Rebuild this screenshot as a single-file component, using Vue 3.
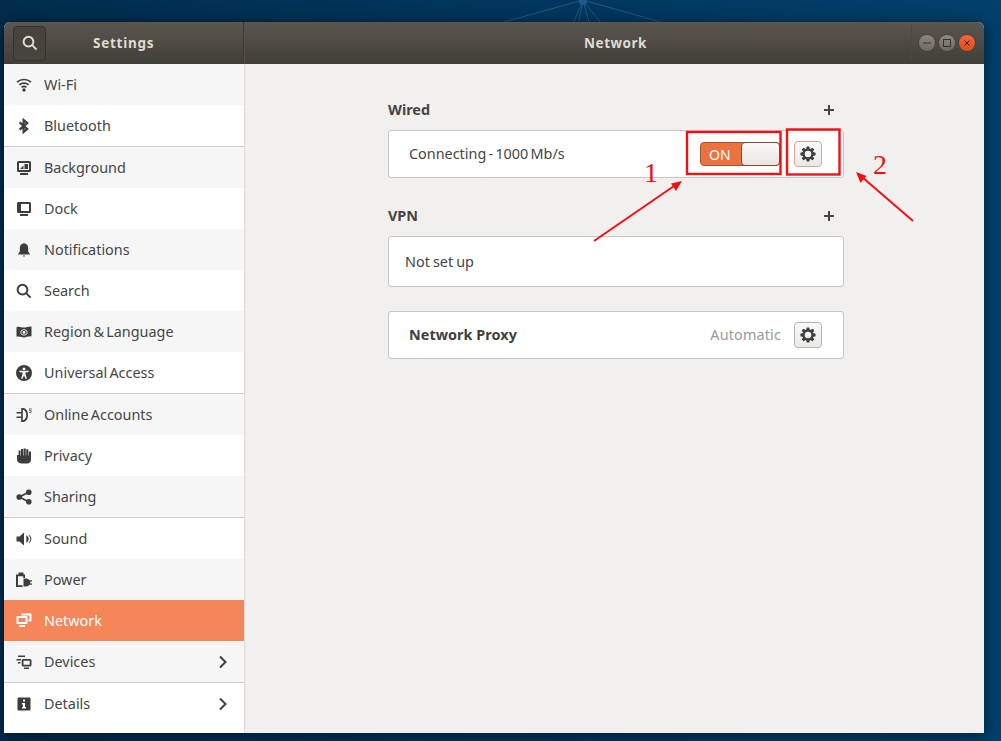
<script setup>
const gearPath = (() => {
  const pts = []
  const teeth = 8
  for (let i = 0; i < teeth; i++) {
    const a = (i / teeth) * Math.PI * 2
    const step = (Math.PI * 2) / teeth
    const corners = [
      [a - step * 0.46, 5.4],
      [a - step * 0.2, 7.7],
      [a + step * 0.2, 7.7],
      [a + step * 0.46, 5.4],
    ]
    for (const [t, r] of corners) {
      pts.push(`${(8 + Math.sin(t) * r).toFixed(2)} ${(8 - Math.cos(t) * r).toFixed(2)}`)
    }
  }
  return `M${pts.join('L')}ZM8 4.7a3.3 3.3 0 1 0 0 6.6a3.3 3.3 0 0 0 0-6.6Z`
})()

const icons = {
  wifi: { s: 'M1 5.2C5 1.6 11 1.6 15 5.2M3.4 7.8C6 5.6 10 5.6 12.6 7.8M5.6 10.2C7 9.2 9 9.2 10.4 10.2', f: 'M6.3 13a1.7 1.7 0 1 0 3.4 0a1.7 1.7 0 1 0-3.4 0Z', w: 1.7 },
  bluetooth: { s: 'M3.6 4.4L11.2 11L7.6 14V2L11.2 5L3.6 11.6', w: 2.2 },
  background: { f: 'M2.5 1H13.5A1.5 1.5 0 0 1 15 2.5V10.5A1.5 1.5 0 0 1 13.5 12H2.5A1.5 1.5 0 0 1 1 10.5V2.5A1.5 1.5 0 0 1 2.5 1ZM3 3V10H13V3ZM4 9L7.5 5.5V9ZM8.5 4H12V9H8.5ZM4 13H12V15H4Z', r: 'evenodd' },
  dock: { f: 'M2.5 1H13.5A1.5 1.5 0 0 1 15 2.5V10.5A1.5 1.5 0 0 1 13.5 12H2.5A1.5 1.5 0 0 1 1 10.5V2.5A1.5 1.5 0 0 1 2.5 1ZM5 3V10H13V3ZM4 13H12V15H4Z', r: 'evenodd' },
  bell: { f: 'M8 1.2C10.8 1.2 12.2 3.4 12.2 6V9.5L14.2 12.6H1.8L3.8 9.5V6C3.8 3.4 5.2 1.2 8 1.2ZM6.8 13.6H9.2L8 15Z' },
  search: { s: 'M10.4 10.4L14.6 14.6M11.4 6.7A4.9 4.9 0 1 1 1.6 6.7A4.9 4.9 0 1 1 11.4 6.7Z', w: 2 },
  region: { f: 'M.5 3.2C3.5 2 6 3.8 8 3.6C10 3.4 12.5 2.2 15.5 2.4V12.4C12.5 12 10 13.4 8 13.4C6 13.4 3.5 12 .5 12.8ZM8 5.2C5.8 5.2 4.4 6.8 4.4 8.4C4.4 10 5.8 11.4 8 11.4C10.2 11.4 11.6 10 11.6 8.4C11.6 6.8 10.2 5.2 8 5.2ZM8 6C9.6 6 10.7 7 10.7 8.4C10.7 9.7 9.6 10.6 8 10.6C6.4 10.6 5.3 9.7 5.3 8.4C5.3 7 6.4 6 8 6ZM8 7A1.4 1.4 0 1 0 8 9.8A1.4 1.4 0 1 0 8 7Z', r: 'evenodd' },
  access: { f: 'M8 0A8 8 0 1 1 8 16A8 8 0 1 1 8 0ZM8 2.4A1.5 1.5 0 1 0 8 5.4A1.5 1.5 0 1 0 8 2.4ZM3.4 5.6V6.9L6.5 7.6V9.5L5 13.6L6.2 14L8 10.6L9.8 14L11 13.6L9.5 9.5V7.6L12.6 6.9V5.6L8 6.3Z', r: 'evenodd' },
  online: { f: 'M5.2 1H7C10 1 12 4 12 8C12 12 10 15 7 15H5.2ZM6.8 2.8V13.2C8.9 13 10.3 10.8 10.3 8C10.3 5.2 8.9 3 6.8 2.8ZM.5 4.9H5.2V6.5H.5ZM.5 9.5H5.2V11.1H.5ZM13.4 1.5H15.6V2.3H14.2V3.2H15.4V5.8H13.2V5H14.6V4H13.4Z', r: 'evenodd' },
  hand: { f: 'M2.6 2.4H4.5V7.4H5V.9H7.1V7.4H7.6V.4H9.7V7.4H10.2V1.3H12.3V7.4H12.8V3.6H15V11.5C15 14 13.4 15.4 11.2 15.4H5.2C2.6 15.4 1 14 1 11.6V7H2.6Z' },
  share: { s: 'M12.7 3.2L3.3 8L12.7 12.8', f: 'M10 3.2a2.8 2.8 0 1 0 5.6 0a2.8 2.8 0 1 0-5.6 0ZM.4 8a2.8 2.8 0 1 0 5.6 0a2.8 2.8 0 1 0-5.6 0ZM10 12.8a2.8 2.8 0 1 0 5.6 0a2.8 2.8 0 1 0-5.6 0Z', w: 1.8 },
  sound: { f: 'M.5 5.5H3.5L8 1.6V14.4L3.5 10.5H.5ZM10.3 4.3C11.9 5.2 12.7 6.5 12.7 8C12.7 9.5 11.9 10.8 10.3 11.7ZM13 3.8C14.6 5 15.4 6.4 15.4 8C15.4 9.6 14.6 11 13 12.2L12.6 11.6C13.8 10.6 14.4 9.4 14.4 8C14.4 6.6 13.8 5.4 12.6 4.4Z' },
  power: { f: 'M2.5 .5H7.5V2.5H9V6H7.2V4.2H2V13.2H6.5V15H0V2.5H2.5ZM7.5 6.5H10A4.5 4.5 0 0 1 13.6 8.2H16V9.6H14.3V11.4H16V12.8H13.6A4.5 4.5 0 0 1 10 14.5H7.5Z', r: 'evenodd' },
  network: { f: 'M1.5 3H10.5A1 1 0 0 1 11.5 4V10A1 1 0 0 1 10.5 11H1.5A1 1 0 0 1 .5 10V4A1 1 0 0 1 1.5 3ZM2.5 5V9H9.5V5ZM3 12H9V14H3ZM5.5 .5H14.5A1 1 0 0 1 15.5 1.5V7.5A1 1 0 0 1 14.5 8.5H12.5V6.5H13.5V2.5H5.5Z', r: 'evenodd' },
  devices: { f: 'M2 1.6H9V3H2ZM.5 5H5V6.6H.5ZM2 8H4.4V9.6H2ZM7.2 5H14A1.5 1.5 0 0 1 15.5 6.5V11A1.5 1.5 0 0 1 14 12.5H7.2A1.5 1.5 0 0 1 5.7 11V6.5A1.5 1.5 0 0 1 7.2 5ZM7.5 6.8V10.7H13.7V6.8ZM8 13.4H13V15H8Z', r: 'evenodd' },
  info: { f: 'M2.5 1.5H13.5A1 1 0 0 1 14.5 2.5V13.5A1 1 0 0 1 13.5 14.5H2.5A1 1 0 0 1 1.5 13.5V2.5A1 1 0 0 1 2.5 1.5ZM7 3.5V5.5H9V3.5ZM6 7V8.4H7V11H6V12.5H10V11H9V7Z', r: 'evenodd' },
}

const rows = [
  { label: 'Wi-Fi', icon: 'wifi' },
  { label: 'Bluetooth', icon: 'bluetooth', sep: true },
  { label: 'Background', icon: 'background' },
  { label: 'Dock', icon: 'dock' },
  { label: 'Notifications', icon: 'bell' },
  { label: 'Search', icon: 'search' },
  { label: 'Region & Language', icon: 'region' },
  { label: 'Universal Access', icon: 'access', sep: true },
  { label: 'Online Accounts', icon: 'online' },
  { label: 'Privacy', icon: 'hand' },
  { label: 'Sharing', icon: 'share', sep: true },
  { label: 'Sound', icon: 'sound' },
  { label: 'Power', icon: 'power' },
  { label: 'Network', icon: 'network', active: true },
  { label: 'Devices', icon: 'devices', chevron: true, sep: true },
  { label: 'Details', icon: 'info', chevron: true },
]
</script>

<template>
  <div class="desktop">
    <svg class="wallpaper" width="1001" height="741" viewBox="0 0 1001 741" aria-hidden="true">
      <g stroke="#1f5a88" stroke-width="1" fill="none">
        <path d="M583 0L490 26M583 0L675 26M583 0L572 26M583 0L578 26M583 0L590 26M583 0L603 26" />
      </g>
      <g fill="#1f5a88">
        <circle cx="583" cy="1" r="4" />
        <circle cx="490" cy="26" r="3" />
        <circle cx="675" cy="26" r="3" />
      </g>
    </svg>

    <div class="window">
      <header class="titlebar">
        <div class="title-left">
          <button class="search-btn" aria-label="Search">
            <svg width="16" height="16" viewBox="0 0 16 16"><path d="M10.4 10.4L14.6 14.6M11.4 6.7A4.9 4.9 0 1 1 1.6 6.7A4.9 4.9 0 1 1 11.4 6.7Z" fill="none" stroke="#dfdbd2" stroke-width="2" /></svg>
          </button>
          <span class="app-title">Settings</span>
        </div>
        <div class="title-right">
          <span class="page-title">Network</span>
          <div class="controls">
            <span class="ctl"><svg width="10" height="10" viewBox="0 0 10 10"><path d="M1 5H9" stroke="#36342f" stroke-width="1" /></svg></span>
            <span class="ctl"><svg width="10" height="10" viewBox="0 0 10 10"><rect x="1.5" y="1.5" width="7" height="7" fill="none" stroke="#36342f" stroke-width="1" /></svg></span>
            <span class="ctl close"><svg width="10" height="10" viewBox="0 0 10 10"><path d="M2.5 2.5L7.5 7.5M7.5 2.5L2.5 7.5" stroke="#4a1c0c" stroke-width="1" /></svg></span>
          </div>
        </div>
      </header>

      <div class="body">
        <nav class="sidebar">
          <div
            v-for="(row, i) in rows"
            :key="row.label"
            class="row"
            :class="{ odd: i % 2 === 0, active: row.active, sep: row.sep }"
          >
            <svg class="row-icon" width="16" height="16" viewBox="0 0 16 16">
              <path
                v-if="icons[row.icon].s"
                :d="icons[row.icon].s"
                fill="none"
                stroke="currentColor"
                :stroke-width="icons[row.icon].w || 1.5"
              />
              <path
                v-if="icons[row.icon].f"
                :d="icons[row.icon].f"
                fill="currentColor"
                :fill-rule="icons[row.icon].r || 'nonzero'"
              />
            </svg>
            <span class="row-label">{{ row.label }}</span>
            <svg v-if="row.chevron" class="chev" width="10" height="14" viewBox="0 0 10 14"><path d="M2 1.5L7.5 7L2 12.5" fill="none" stroke="#3f3f3f" stroke-width="2" /></svg>
          </div>
        </nav>

        <main class="content">
          <section class="column">
            <div class="sec-head wired-head">
              <h2>Wired</h2>
              <svg class="plus" width="12" height="12" viewBox="0 0 12 12"><path d="M6 1V11M1 6H11" stroke="#454545" stroke-width="2" /></svg>
            </div>
            <div class="card wired">
              <span class="wired-text">Connecting - 1000 Mb/s</span>
              <div class="switch">
                <span class="on">ON</span>
                <span class="thumb"></span>
              </div>
              <button class="gear tinted" aria-label="Wired settings">
                <svg width="16" height="16" viewBox="0 0 16 16"><path :d="gearPath" fill="#3f3f3f" fill-rule="evenodd" /></svg>
              </button>
            </div>

            <div class="sec-head vpn-head">
              <h2>VPN</h2>
              <svg class="plus" width="12" height="12" viewBox="0 0 12 12"><path d="M6 1V11M1 6H11" stroke="#454545" stroke-width="2" /></svg>
            </div>
            <div class="card vpn"><span class="vpn-text">Not set up</span></div>

            <div class="card proxy">
              <strong>Network Proxy</strong>
              <span class="auto">Automatic</span>
              <button class="gear" aria-label="Proxy settings">
                <svg width="16" height="16" viewBox="0 0 16 16"><path :d="gearPath" fill="#3f3f3f" fill-rule="evenodd" /></svg>
              </button>
            </div>
          </section>
        </main>
      </div>
    </div>

    <svg class="annotations" width="1001" height="741" viewBox="0 0 1001 741" aria-hidden="true">
      <rect x="687" y="132" width="93.5" height="42" fill="none" stroke="#f40f14" stroke-width="2.4" />
      <rect x="787" y="129.5" width="52.5" height="45" fill="none" stroke="#f40f14" stroke-width="2.4" />
      <path d="M594 241L674 186" stroke="#f40f14" stroke-width="2" fill="none" />
      <path d="M682 181L671 183.5L676 191Z" fill="#f40f14" />
      <path d="M913 221L862 177" stroke="#f40f14" stroke-width="2" fill="none" />
      <path d="M856 172L860.5 183L866.5 176Z" fill="#f40f14" />
    </svg>
    <span class="mark mark-1">1</span>
    <span class="mark mark-2">2</span>
  </div>
</template>

<style>
html, body { margin: 0; padding: 0; background: #012f52; }
</style>

<style scoped>
.desktop {
  position: relative;
  width: 1001px;
  height: 741px;
  overflow: hidden;
  box-sizing: border-box;
  padding: 22px 17px 8px 4px;
  background: linear-gradient(90deg, #012c4d 0%, #02406c 100%);
  font-family: "Noto Sans", "Open Sans", sans-serif;
  font-size: 14.4px;
  word-spacing: -1.5px;
  color: #454545;
}
.wallpaper, .annotations { position: absolute; left: 0; top: 0; pointer-events: none; }
.window {
  position: relative;
  height: 711px;
  display: flex;
  flex-direction: column;
  border-radius: 6px 6px 0 0;
  overflow: hidden;
  box-shadow: 0 2px 16px rgba(0, 0, 0, 0.55);
  background: #f2f0ee;
}
.titlebar {
  height: 42px;
  flex: none;
  display: flex;
  background: linear-gradient(180deg, #5b574f 0%, #413e38 100%);
  color: #dfdbd2;
  font-weight: 700;
}
.title-left {
  width: 240px;
  flex: none;
  box-sizing: border-box;
  padding-left: 9px;
  display: flex;
  align-items: center;
  border-right: 1px solid #3a3732;
  box-shadow: 1px 0 0 #57534c;
}
.search-btn {
  width: 33px;
  height: 35px;
  padding: 0;
  display: flex;
  align-items: center;
  justify-content: center;
  border: 1px solid #35332e;
  border-radius: 4px;
  background: #47443e;
}
.app-title {
  margin-left: 47px;
  letter-spacing: 0.75px;
  font-size: 13.5px;
}
.title-right {
  flex: 1;
  position: relative;
  display: flex;
  align-items: center;
  justify-content: center;
}
.page-title {
  margin-left: 3px;
  font-size: 13.5px;
  letter-spacing: 0.5px;
}
.controls {
  position: absolute;
  right: 9px;
  top: 3px;
  bottom: 3px;
  display: flex;
  align-items: center;
  gap: 4px;
  padding-left: 7px;
  border-left: 1px solid #4b4842;
}
.ctl {
  width: 16px;
  height: 16px;
  border-radius: 50%;
  display: flex;
  align-items: center;
  justify-content: center;
  background: linear-gradient(180deg, #8b887f, #6d6a63);
  box-shadow: 0 0 0 0.5px #3a3732;
}
.ctl.close { background: linear-gradient(180deg, #f0683a, #de4d1e); }
.body { flex: 1; display: flex; min-height: 0; }
.sidebar {
  width: 240px;
  flex: none;
  background: #fff;
  border-right: 1px solid #dcdad6;
}
.row {
  height: 41px;
  display: flex;
  align-items: center;
  padding: 0 12px;
  background: #fff;
}
.row.odd { background: #f6f6f6; }
.row.sep { box-sizing: content-box; border-bottom: 1px solid #cfcdca; }
.row.active { background: #f5865a; color: #fff; }
.row-icon { flex: none; color: #3d3d3d; }
.row.active .row-icon { color: #fff; }
.row-label { margin-left: 12px; margin-bottom: 1px; flex: 1; }
.chev { flex: none; margin-right: 4px; }
.content {
  flex: 1;
  display: flex;
  justify-content: flex-start;
  padding-left: 143px;
}
.column { width: 456px; }
h2 { margin: 0 0 2px; font-size: 14.4px; font-weight: 700; color: #454545; }
.sec-head {
  display: flex;
  align-items: center;
  justify-content: space-between;
  height: 20px;
  padding-right: 9px;
}
.wired-head { margin-top: 36px; margin-bottom: 10px; }
.vpn-head { margin-top: 28px; margin-bottom: 10px; }
.card {
  box-sizing: border-box;
  background: #fff;
  border: 1px solid #c8c6c3;
  border-radius: 3px;
  display: flex;
  align-items: center;
}
.wired { height: 48px; padding: 0 21px 0 20px; }
.wired-text { flex: 1; margin-bottom: 2px; }
.switch {
  width: 80px;
  height: 24px;
  box-sizing: border-box;
  display: flex;
  align-items: center;
  border: 1px solid #a6542e;
  border-radius: 4px;
  background: #ec7242;
  color: #fff;
  position: relative;
}
.on { margin-left: 8px; font-size: 14px; }
.thumb {
  position: absolute;
  right: -1px;
  top: -1px;
  bottom: -1px;
  width: 39px;
  box-sizing: border-box;
  border: 1px solid #8a4a30;
  border-radius: 4px;
  background: linear-gradient(180deg, #fbfafa, #e8e6e3);
}
.gear {
  flex: none;
  width: 28px;
  height: 26px;
  margin-left: 14px;
  padding: 0;
  display: flex;
  align-items: center;
  justify-content: center;
  border: 1px solid #b5b3ae;
  border-radius: 4px;
  background: linear-gradient(180deg, #fafafa, #ebe9e6);
}
.gear.tinted { border-color: #dca68d; }
.vpn { height: 51px; padding-left: 16px; }
.vpn-text { margin-bottom: 1px; word-spacing: -0.7px; }
.proxy { height: 48px; margin-top: 24px; padding: 0 21px 0 20px; }
.proxy strong { flex: 1; font-weight: 700; color: #3f3f3f; margin-bottom: 2px; word-spacing: 0; letter-spacing: 0.05px; }
.auto { color: #9a9a97; margin-bottom: 2px; letter-spacing: 0.15px; }
.proxy .gear { margin-left: 13px; }
.mark {
  position: absolute;
  font-family: "Liberation Serif", serif;
  font-size: 28px;
  line-height: 28px;
  color: #f40f14;
}
.mark-1 { left: 644px; top: 159px; }
.mark-2 { left: 873px; top: 151px; }
</style>
